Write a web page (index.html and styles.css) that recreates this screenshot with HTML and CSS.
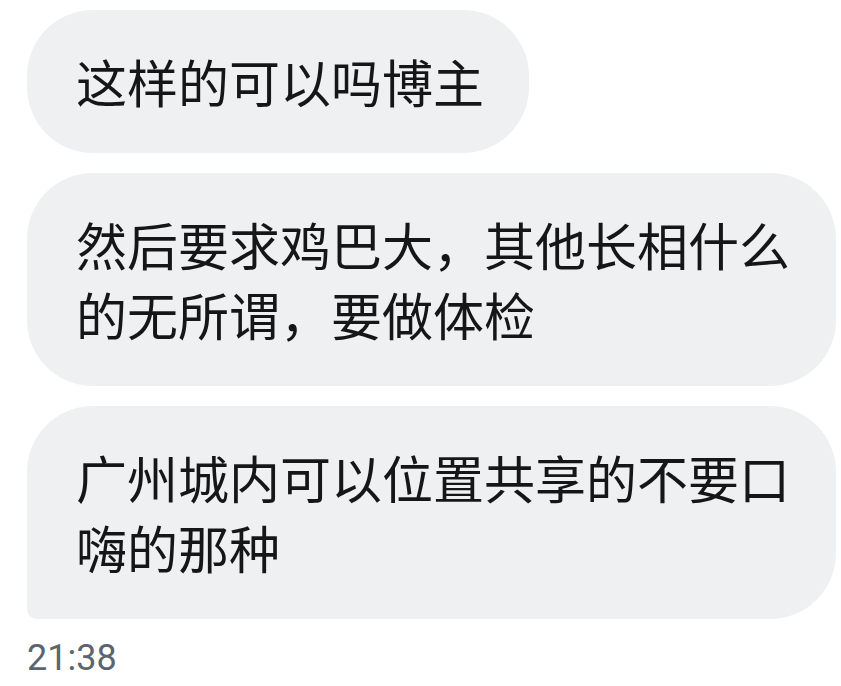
FILE: index.html
```html
<!doctype html>
<html>
<head>
	<meta charset="utf-8" />
	<title>聊天</title>
	<link rel="stylesheet" href="styles.css">
</head>
<body>
	<div class="chat">
		<div class="msg">这样的可以吗博主</div>
		<div class="msg">然后要求鸡巴大，其他长相什么的无所谓，要做体检</div>
		<div class="msg last">广州城内可以位置共享的不要口嗨的那种</div>
		<div class="time">21:38</div>
	</div>
</body>
</html>
```

FILE: styles.css
```css
body {
	margin: 0;
	padding: 0;
	background: #fff;
}

.chat {
	display: flex;
	flex-direction: column;
	align-items: flex-start;
	gap: 20px;
	padding: 10px 5px 0 27px;
}

.msg {
	box-sizing: border-box;
	max-width: 809px;
	padding: 36px 45px 37px 49px;
	background: #eef0f2;
	border-radius: 66px;
	font-family: "Noto Sans CJK SC", sans-serif;
	font-size: 51px;
	line-height: 70px;
	color: #161616;
}

.msg.last {
	border-bottom-left-radius: 10px;
}

.time {
	margin-top: -3px;
	font-family: Roboto, "Liberation Sans", sans-serif;
	font-size: 36px;
	color: #5c646e;
	line-height: 44px;
}
```
